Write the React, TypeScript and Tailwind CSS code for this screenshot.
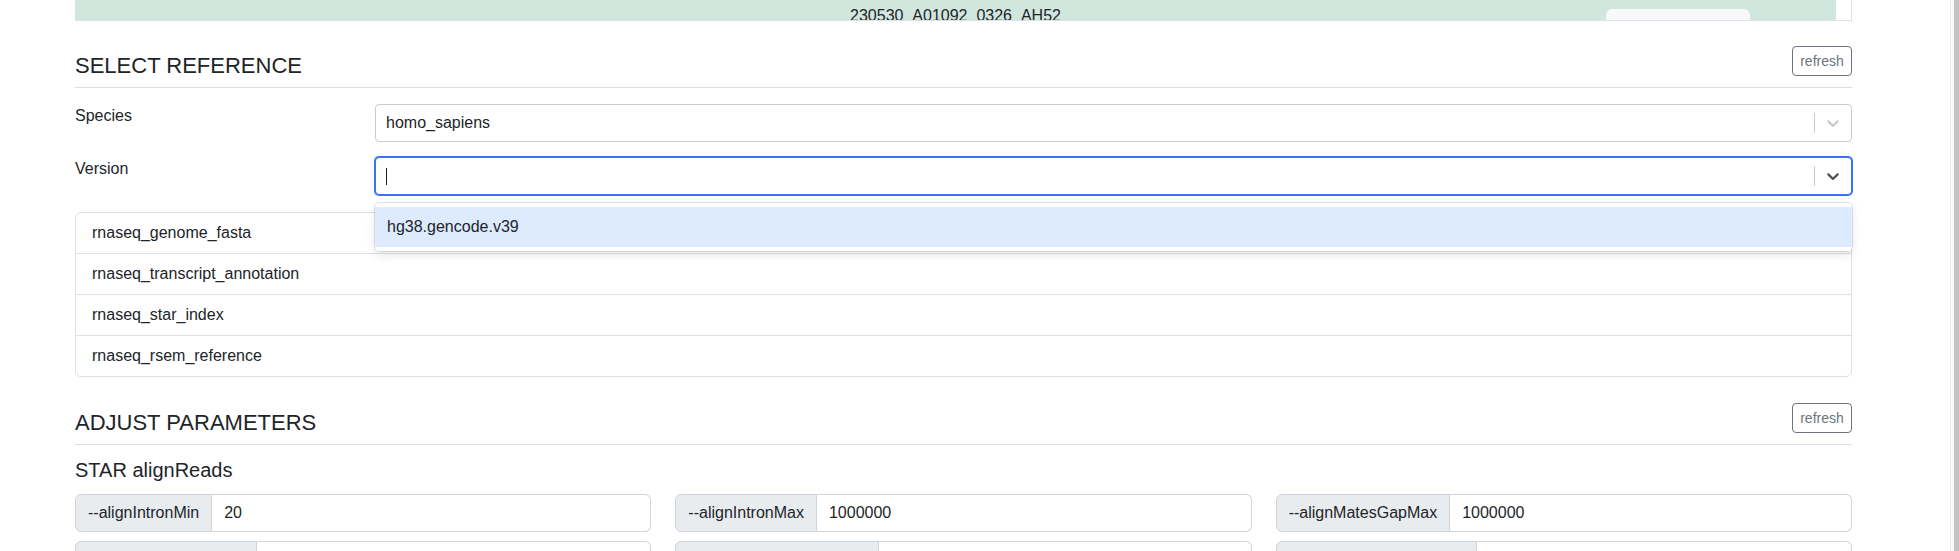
import React from 'react'

const Chevron = ({ className }: { className: string }) => (
  <svg viewBox="0 0 20 20" width="20" height="20" fill="currentColor" aria-hidden="true" className={className}>
    <path d="M4.516 7.548c0.436-0.446 1.043-0.481 1.576 0l3.908 3.747 3.908-3.747c0.533-0.481 1.141-0.446 1.574 0 0.436 0.445 0.408 1.197 0 1.615-0.406 0.418-4.695 4.502-4.695 4.502-0.217 0.223-0.502 0.335-0.787 0.335s-0.57-0.112-0.789-0.335c0 0-4.287-4.084-4.695-4.502s-0.436-1.17 0-1.615z" />
  </svg>
)

function SectionHeader({ title }: { title: string }) {
  return (
    <div className="flex items-end justify-between border-b border-[#dedede] pb-2">
      <h4 className="text-[22px] leading-[26px]">{title}</h4>
      <button className="mb-[3px] h-[30px] w-[60px] rounded border border-[#6c757d] text-sm text-[#6c757d]">
        refresh
      </button>
    </div>
  )
}

const refs = [
  'rnaseq_genome_fasta',
  'rnaseq_transcript_annotation',
  'rnaseq_star_index',
  'rnaseq_rsem_reference',
]

const params = [
  { name: '--alignIntronMin', value: '20' },
  { name: '--alignIntronMax', value: '1000000' },
  { name: '--alignMatesGapMax', value: '1000000' },
  { name: '--alignSJoverhangMin', value: '8' },
  { name: '--alignSJDBoverhangMin', value: '1' },
  { name: '--outFilterMultimapNmax', value: '20' },
]

export default function App() {
  return (
    <div className="flex min-h-screen bg-white font-['Liberation_Sans',Arial,sans-serif] text-base text-[#212529]">
      <main className="flex-1 pl-[75px]">
        <div className="w-[1777px]">
          {/* bottom of the run table, scrolled */}
          <div className="h-[21px] overflow-hidden border-r border-b border-[#dee2e6]">
            <div className="mr-[15px] grid h-full grid-cols-[1fr_auto_1fr] bg-[#d1e7dd]">
              <div />
              <div className="pt-[4px] leading-6">230530_A01092_0326_AH52</div>
              <div className="flex justify-end">
                <div className="mt-[9px] mr-[86px] h-[20px] w-[144px] rounded-t-md bg-[#f8f9fa]" />
              </div>
            </div>
          </div>

          <section className="mt-[25px]">
            <SectionHeader title="SELECT REFERENCE" />

            <div className="mt-4 grid grid-cols-[300px_1fr] items-start">
              <label className="leading-6">Species</label>
              <div className="flex h-[38px] items-center rounded border border-[#cccccc] bg-white">
                <div className="flex-1 px-[10px]">homo_sapiens</div>
                <span className="my-2 w-px self-stretch bg-[#cccccc]" />
                <div className="p-2 text-[#cccccc]">
                  <Chevron className="block" />
                </div>
              </div>
            </div>

            <div className="mt-[15px] grid grid-cols-[300px_1fr] items-start">
              <label className="leading-6">Version</label>
              <div className="relative">
                <div className="flex h-[38px] items-center rounded border border-[#3c71f5] bg-white shadow-[0_0_0_1px_#3c71f5]">
                  <div className="flex-1 pl-[10px]">
                    <span className="block h-[17px] w-px bg-[#222]" />
                  </div>
                  <span className="my-2 w-px self-stretch bg-[#cccccc]" />
                  <div className="p-2 text-[#555555]">
                    <Chevron className="block" />
                  </div>
                </div>
                <div className="absolute top-full right-0 left-0 z-10 mt-2 rounded bg-white py-1 shadow-[0_0_0_1px_rgba(0,0,0,0.1),0_4px_11px_rgba(0,0,0,0.1)]">
                  <div className="bg-[#deebff] px-3 py-2 leading-6">hg38.gencode.v39</div>
                </div>
              </div>
            </div>

            <ul className="mt-[17px] rounded-md border border-[#dfdfdf]">
              {refs.map((r, i) => (
                <li
                  key={r}
                  className={`px-4 py-2 leading-6 ${i < refs.length - 1 ? 'border-b border-[#dfdfdf]' : ''}`}
                >
                  {r}
                </li>
              ))}
            </ul>
          </section>

          <section className="mt-[26px]">
            <SectionHeader title="ADJUST PARAMETERS" />
            <h5 className="mt-[13px] text-xl leading-6">STAR alignReads</h5>
            <div className="mt-3 grid grid-cols-3 gap-x-6 gap-y-[9px]">
              {params.map((p) => (
                <div key={p.name} className="flex h-[38px]">
                  <span className="flex items-center rounded-l-md border border-[#ced4da] bg-[#e9ecef] px-3 whitespace-nowrap">
                    {p.name}
                  </span>
                  <span className="flex flex-1 items-center rounded-r-md border border-l-0 border-[#ced4da] bg-white px-3">
                    {p.value}
                  </span>
                </div>
              ))}
            </div>
          </section>
        </div>
      </main>
      <aside className="flex w-[9px] border-l border-[#ebebeb] bg-[#fafafa]">
        <div className="ml-auto w-[5px] bg-[#c4c4c4]" />
      </aside>
    </div>
  )
}
